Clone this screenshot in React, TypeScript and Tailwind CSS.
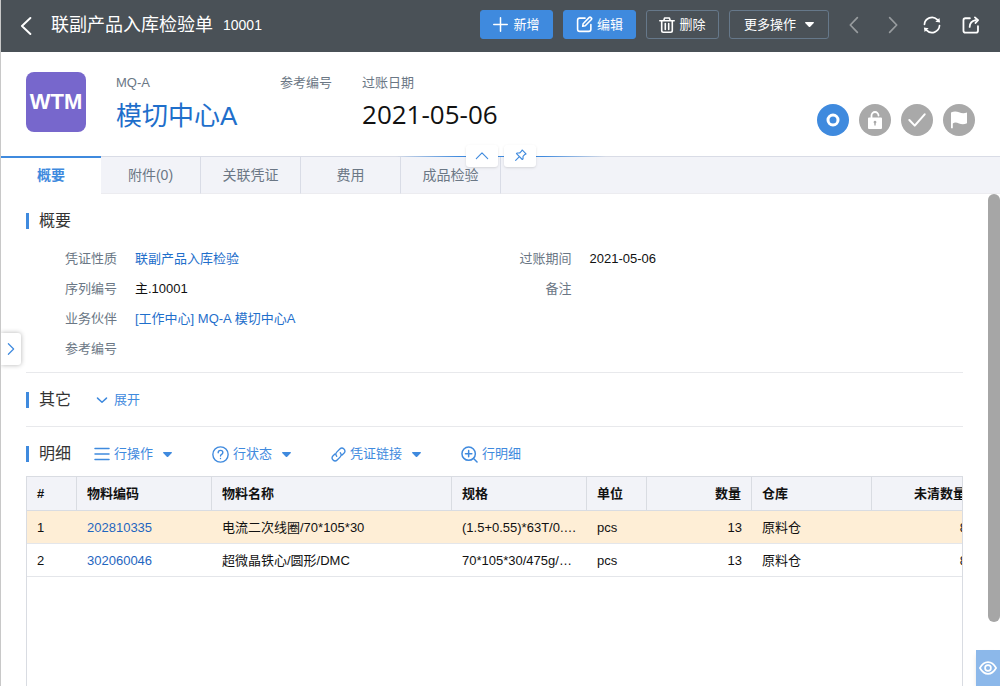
import type { ReactNode } from "react";

const rows = [
  { n: 1, code: "202810335", name: "电流二次线圈/70*105*30", spec: "(1.5+0.55)*63T/0.35mm", unit: "pcs", qty: 13, store: "原料仓", open: 8 },
  { n: 2, code: "302060046", name: "超微晶铁心/圆形/DMC", spec: "70*105*30/475g/DMC", unit: "pcs", qty: 13, store: "原料仓", open: 8 },
];

const columns = [
  { label: "#", width: "w-[50px]", align: "text-left" },
  { label: "物料编码", width: "w-[135px]", align: "text-left" },
  { label: "物料名称", width: "w-[240px]", align: "text-left" },
  { label: "规格", width: "w-[135px]", align: "text-left" },
  { label: "单位", width: "w-[60px]", align: "text-left" },
  { label: "数量", width: "w-[105px]", align: "text-right" },
  { label: "仓库", width: "w-[120px]", align: "text-left" },
  { label: "未清数量", width: "w-[105px]", align: "text-right" },
];

const tabs = ["概要", "附件(0)", "关联凭证", "费用", "成品检验"];

function Icon({ children, className = "size-4", stroke = 1.5 }: { children: ReactNode; className?: string; stroke?: number }) {
  return (
    <svg viewBox="0 0 16 16" className={className} fill="none" stroke="currentColor" strokeWidth={stroke} strokeLinecap="round" strokeLinejoin="round" aria-hidden="true">
      {children}
    </svg>
  );
}

function Caret() {
  return (
    <svg viewBox="0 0 9 5" className="h-[5px] w-[9px]" fill="currentColor" aria-hidden="true">
      <path d="M.6 0h7.800q.8.2.4.900L5.200 4.700q-.7.500-1.400 0L.2.9Q-.2.2.6 0z" />
    </svg>
  );
}

function Heading({ title, children }: { title: string; children?: ReactNode }) {
  return (
    <div className="flex h-[30px] items-center">
      <span className="h-4 w-[3px] bg-[#3f8ade]" />
      <h2 className="ml-[10px] text-base leading-6 text-[#333]">{title}</h2>
      {children}
    </div>
  );
}

function Field({ label, children }: { label: string; children?: ReactNode }) {
  return (
    <div className="flex h-[30px] items-center">
      <dt className="w-[91px] shrink-0 text-right text-[#6b7785]">{label}</dt>
      <dd className="ml-[18px] whitespace-nowrap text-[#111]">{children}</dd>
    </div>
  );
}

function HeaderButton({ primary = false, className, children }: { primary?: boolean; className: string; children: ReactNode }) {
  return (
    <button
      type="button"
      className={`flex h-[29px] items-center justify-center rounded-[3px] border text-[13px] text-white ${primary ? "border-[#3f8ade] bg-[#3f8ade]" : "border-[#66788a]"} ${className}`}
    >
      {children}
    </button>
  );
}

function LineButton({ className, caret = true, icon, children }: { className: string; caret?: boolean; icon: ReactNode; children: ReactNode }) {
  return (
    <button type="button" className={`flex items-center text-[#3f8ade] ${className}`}>
      {icon}
      <span className="mr-[10px] ml-1">{children}</span>
      {caret && <Caret />}
    </button>
  );
}

export default function App() {
  return (
    <div className="relative flex h-screen flex-col overflow-hidden border-l border-[#c8c8c8] bg-white font-['Liberation_Sans','Noto_Sans_CJK_SC',sans-serif] text-[13px] leading-5 text-[#111]">
      <header className="flex h-[52px] shrink-0 items-center bg-[#4a5157] pr-5 pb-[3px] pl-[17px] text-white">
        <button type="button" aria-label="返回" className="pt-[3px]">
          <Icon className="size-[18px]" stroke={1.700}><path d="M11 .9 3.500 8l7.500 7.100" /></Icon>
        </button>
        <h1 className="ml-[15px] text-lg leading-7">联副产品入库检验单</h1>
        <span className="ml-[10px] text-sm">10001</span>
        <div className="ml-auto flex gap-[10px]">
          <HeaderButton primary className="w-[73px] gap-[5px]">
            <Icon className="size-[15px]" stroke={1.600}><path d="M8 .8v14.400M.8 8h14.400" /></Icon>
            新增
          </HeaderButton>
          <HeaderButton primary className="w-[73px] gap-[4px]">
            <Icon className="size-[17px]"><path d="M8.500 2H3.500Q1.500 2 1.500 4v8.500q0 2 2 2h8.500q2 0 2-2V8M6.300 9.700l.4-2.400L12.500 1.300q.7-.6 1.300 0l.7.7q.6.6 0 1.300L8.700 9.200z" /></Icon>
            编辑
          </HeaderButton>
          <HeaderButton className="w-[73px] gap-[4px]">
            <Icon className="size-4" stroke={1.600}><path d="M.8 3.800h14.400M4.800 3.500l.8-2.500h4.800l.8 2.500M2.700 4v9.500q0 1.700 1.700 1.700h7.200q1.700 0 1.700-1.700V4M6.300 6.500v6M9.700 6.500v6" /></Icon>
            删除
          </HeaderButton>
          <HeaderButton className="w-[100px] gap-[9px]">更多操作<Caret /></HeaderButton>
        </div>
        <nav className="ml-4 flex items-center gap-[21px]" aria-label="单据导航">
          <button type="button" aria-label="上一张" className="text-[#989c9f]"><Icon className="size-[18px]"><path d="M11 1.500 4.700 8l6.300 6.500" /></Icon></button>
          <button type="button" aria-label="下一张" className="text-[#989c9f]"><Icon className="size-[18px]"><path d="m5 1.500 6.300 6.500L5 14.500" /></Icon></button>
          <button type="button" aria-label="刷新">
            <Icon className="size-[18px]" stroke={1.500}><path d="M1.300 7.500A6.700 6.700 0 0 1 12.700 3.200M14.700 8.500A6.700 6.700 0 0 1 3.300 12.800" /><path fill="currentColor" stroke="none" d="M.8 10.200l4.200.6-3.600 3.400zM15.200 5.800l-4.200-.6 3.600-3.400z" /></Icon>
          </button>
          <button type="button" aria-label="分享">
            <Icon className="size-[18px]" stroke={1.600}><path d="M7 2H3Q1.300 2 1.300 3.700v9.300q0 1.700 1.700 1.700h9.500q1.700 0 1.700-1.700V9M6.800 9.700Q7 4.700 12 3.700M11.500 1.200l2.800 2.500-2.300 2.500" /></Icon>
          </button>
        </nav>
      </header>

      <section className="flex h-[104px] shrink-0 items-start pt-5 pr-[25px] pl-[25px]">
        <div className="flex size-[60px] shrink-0 items-center justify-center rounded-lg bg-[#7767cc] text-[22px] font-bold text-white">WTM</div>
        <div className="ml-[30px] flex gap-[30px] text-[#6b7785]">
          <div className="min-w-[134px]">
            <div className="pt-px">MQ-A</div>
            <a href="#center" className="mt-[3px] block text-[26px] leading-10 text-[#1f6fcb]">模切中心A</a>
          </div>
          <div className="pt-px">参考编号</div>
          <div>
            <div className="pt-px">过账日期</div>
            <div className="mt-px font-['Open_Sans',sans-serif] text-[26px] leading-10 text-[#111]">2021-05-06</div>
          </div>
        </div>
        <div className="mt-8 ml-auto flex gap-[10px] text-white">
          <button type="button" aria-label="状态" className="flex size-8 items-center justify-center rounded-full bg-[#3f8ade]">
            <Icon className="size-4" stroke={3}><circle cx="8" cy="8" r="5" /></Icon>
          </button>
          <button type="button" aria-label="锁定" className="flex size-8 items-center justify-center rounded-full bg-[#a9a9a9]">
            <svg viewBox="0 0 16 20" className="h-5 w-4" aria-hidden="true"><path d="M4.500 8V5.500a3.500 3.500 0 0 1 7 0" fill="none" stroke="currentColor" strokeWidth="1.800" strokeLinecap="round" /><path fill="currentColor" fillRule="evenodd" d="M2 7.500h12q1 0 1 1V18q0 1-1 1H2q-1 0-1-1V8.500q0-1 1-1zm6 3.300a1.400 1.400 0 0 0-.7 2.600v2h1.400v-2a1.400 1.400 0 0 0-.7-2.600z" /></svg>
          </button>
          <button type="button" aria-label="审核" className="flex size-8 items-center justify-center rounded-full bg-[#a9a9a9]">
            <Icon className="size-[18px]" stroke={1.800}><path d="m1.200 8 4.800 5L14.800 3" /></Icon>
          </button>
          <button type="button" aria-label="标记" className="flex size-8 items-center justify-center rounded-full bg-[#a9a9a9]">
            <svg viewBox="0 0 18 18" className="size-[18px]" fill="currentColor" aria-hidden="true"><path d="M1 1.500Q5-.3 9 1.300t8 .2v10.700q-4 1.800-8 .2t-6.200.1v4.700H1z" /></svg>
          </button>
        </div>
      </section>

      <div className="relative shrink-0">
        <div className="flex h-[38px] border-t border-[#d9dce6] bg-[#f2f3f8] text-sm text-[#6b7785]" role="tablist">
          {tabs.map((tab, i) => (
            <button
              key={tab}
              type="button"
              role="tab"
              aria-selected={i === 0}
              className={i === 0 ? "-mt-px w-[100px] border-t-2 border-[#3f8ade] bg-white pb-[3px] font-bold text-[#3f8ade]" : "w-[100px] border-r border-b border-r-[#d9dce6] border-b-[#ececf0]"}
            >
              {tab}
            </button>
          ))}
          <div className="flex-1 border-b border-[#ececf0]" />
        </div>
        <div className="absolute top-0 left-1/2 h-px w-[210px] -translate-x-1/2 bg-[linear-gradient(90deg,transparent,#3f8ade_30%,#3f8ade_70%,transparent)]" />
        <div className="absolute -top-[11px] left-1/2 flex -translate-x-1/2 gap-[6px] text-[#3f8ade]">
          <button type="button" aria-label="收起" className="flex h-[22px] w-8 items-center justify-center rounded-[3px] bg-white shadow"><Icon className="size-[14px]" stroke={1.300}><path d="m1.500 11 6.500-6.500 6.500 6.500" /></Icon></button>
          <button type="button" aria-label="固定" className="flex h-[22px] w-8 items-center justify-center rounded-[3px] bg-white pb-[2px] pl-[2px] shadow"><Icon className="size-3"><path d="m9.500 1.300 5.200 5.200-1.600.8-2.400 2.500v3.200l-1 1L2 6.300l1-1h3.200l2.500-2.400zM5.200 10.800.9 15.100" /></Icon></button>
        </div>
      </div>

      <div className="flex min-h-0 flex-1">
        <main className="flex min-w-0 flex-1 flex-col px-[25px] pt-3">
          <section className="border-b border-[#e8e9ec] pb-2">
            <Heading title="概要" />
            <dl className="mt-2 grid grid-cols-2 pr-7">
              <div>
                <Field label="凭证性质"><a href="#type" className="text-[#1f6fcb]">联副产品入库检验</a></Field>
                <Field label="序列编号">主.10001</Field>
                <Field label="业务伙伴"><a href="#partner" className="text-[#1f6fcb]">[工作中心] MQ-A 模切中心A</a></Field>
                <Field label="参考编号" />
              </div>
              <div>
                <Field label="过账期间">2021-05-06</Field>
                <Field label="备注" />
              </div>
            </dl>
          </section>
          <section className="border-b border-[#e8e9ec] pt-3 pb-[11px]">
            <Heading title="其它">
              <button type="button" className="ml-[25px] flex items-center gap-[6px] text-[#3f8ade]">
                <Icon className="size-3" stroke={2}><path d="m2 5.500 6 5.500 6-5.500" /></Icon>展开
              </button>
            </Heading>
          </section>
          <section className="flex min-h-0 flex-1 flex-col pt-3">
            <Heading title="明细">
              <LineButton className="ml-[23px]" icon={<Icon className="size-4"><path d="M1 2.500h14M1 8h14M1 13.500h14" /></Icon>}>行操作</LineButton>
              <LineButton className="ml-10" icon={<Icon className="size-[17px]" stroke={1.300}><circle cx="8" cy="8" r="7.200" /><path d="M5.800 6.300q0-2.200 2.200-2.200t2.200 2q0 1.100-1.200 1.800-1 .6-1 1.500M8 11.700v.1" /></Icon>}>行状态</LineButton>
              <LineButton className="ml-10" icon={<Icon className="size-[15px]" stroke={1.400}><path d="M6.100 9.900a3.100 3.100 0 0 1 0-4.400l3.300-3.300a3.100 3.100 0 0 1 4.400 4.400l-2 2M9.900 6.100a3.100 3.100 0 0 1 0 4.400l-3.300 3.300a3.100 3.100 0 0 1-4.400-4.400l2-2" /></Icon>}>凭证链接</LineButton>
              <LineButton className="ml-10" caret={false} icon={<Icon className="size-[17px]" stroke={1.400}><circle cx="7.200" cy="7.200" r="6.300" /><path d="M7.200 4.200v6M4.200 7.200h6M11.800 11.800l3.300 3.300" /></Icon>}>行明细</LineButton>
            </Heading>
            <div className="mt-[7px] flex-1 overflow-hidden border-x border-t border-[#d9dce2]">
              <table className="w-[950px] table-fixed border-separate border-spacing-0">
                <thead>
                  <tr className="h-[34px] bg-[#f2f3f8]">
                    {columns.map((c) => (
                      <th key={c.label} scope="col" className={`border-r border-b border-[#d9dce2] px-[10px] font-bold whitespace-nowrap ${c.width} ${c.align}`}>{c.label}</th>
                    ))}
                  </tr>
                </thead>
                <tbody>
                  {rows.map((r) => (
                    <tr key={r.n} className={`h-[33px] *:border-b *:border-[#e4e6ea] *:px-[10px] *:pt-px ${r.n === 1 ? "bg-[#feeed6]" : "bg-white"}`}>
                      <td>{r.n}</td>
                      <td><a href={`#${r.code}`} className="text-[#1f66c0]">{r.code}</a></td>
                      <td className="truncate">{r.name}</td>
                      <td className="truncate">{r.spec}</td>
                      <td>{r.unit}</td>
                      <td className="text-right">{r.qty}</td>
                      <td>{r.store}</td>
                      <td className="text-right">{r.open}</td>
                    </tr>
                  ))}
                </tbody>
              </table>
            </div>
          </section>
        </main>
        <div className="flex w-3 shrink-0 flex-col">
          <div className="h-[87%] rounded-full bg-[#a6a6a6]" />
        </div>
      </div>

      <button type="button" aria-label="展开侧栏" className="absolute top-[333px] left-0 flex h-8 w-5 items-center justify-center rounded-r-[3px] bg-white text-[#3f8ade] shadow-[0_0_5px_rgba(0,0,0,0.3)]">
        <Icon className="size-[14px]" stroke={1.400}><path d="m5 2 6 6-6 6" /></Icon>
      </button>
      <button type="button" aria-label="预览" className="absolute right-0 bottom-0 flex h-9 w-6 items-center justify-center bg-[#8cb8ea] text-white shadow-md">
        <Icon className="size-[18px]"><path d="M.8 8Q3.800 2.800 8 2.800T15.200 8Q12.200 13.200 8 13.200T.8 8z" /><circle cx="8" cy="8" r="2.600" /></Icon>
      </button>
    </div>
  );
}
